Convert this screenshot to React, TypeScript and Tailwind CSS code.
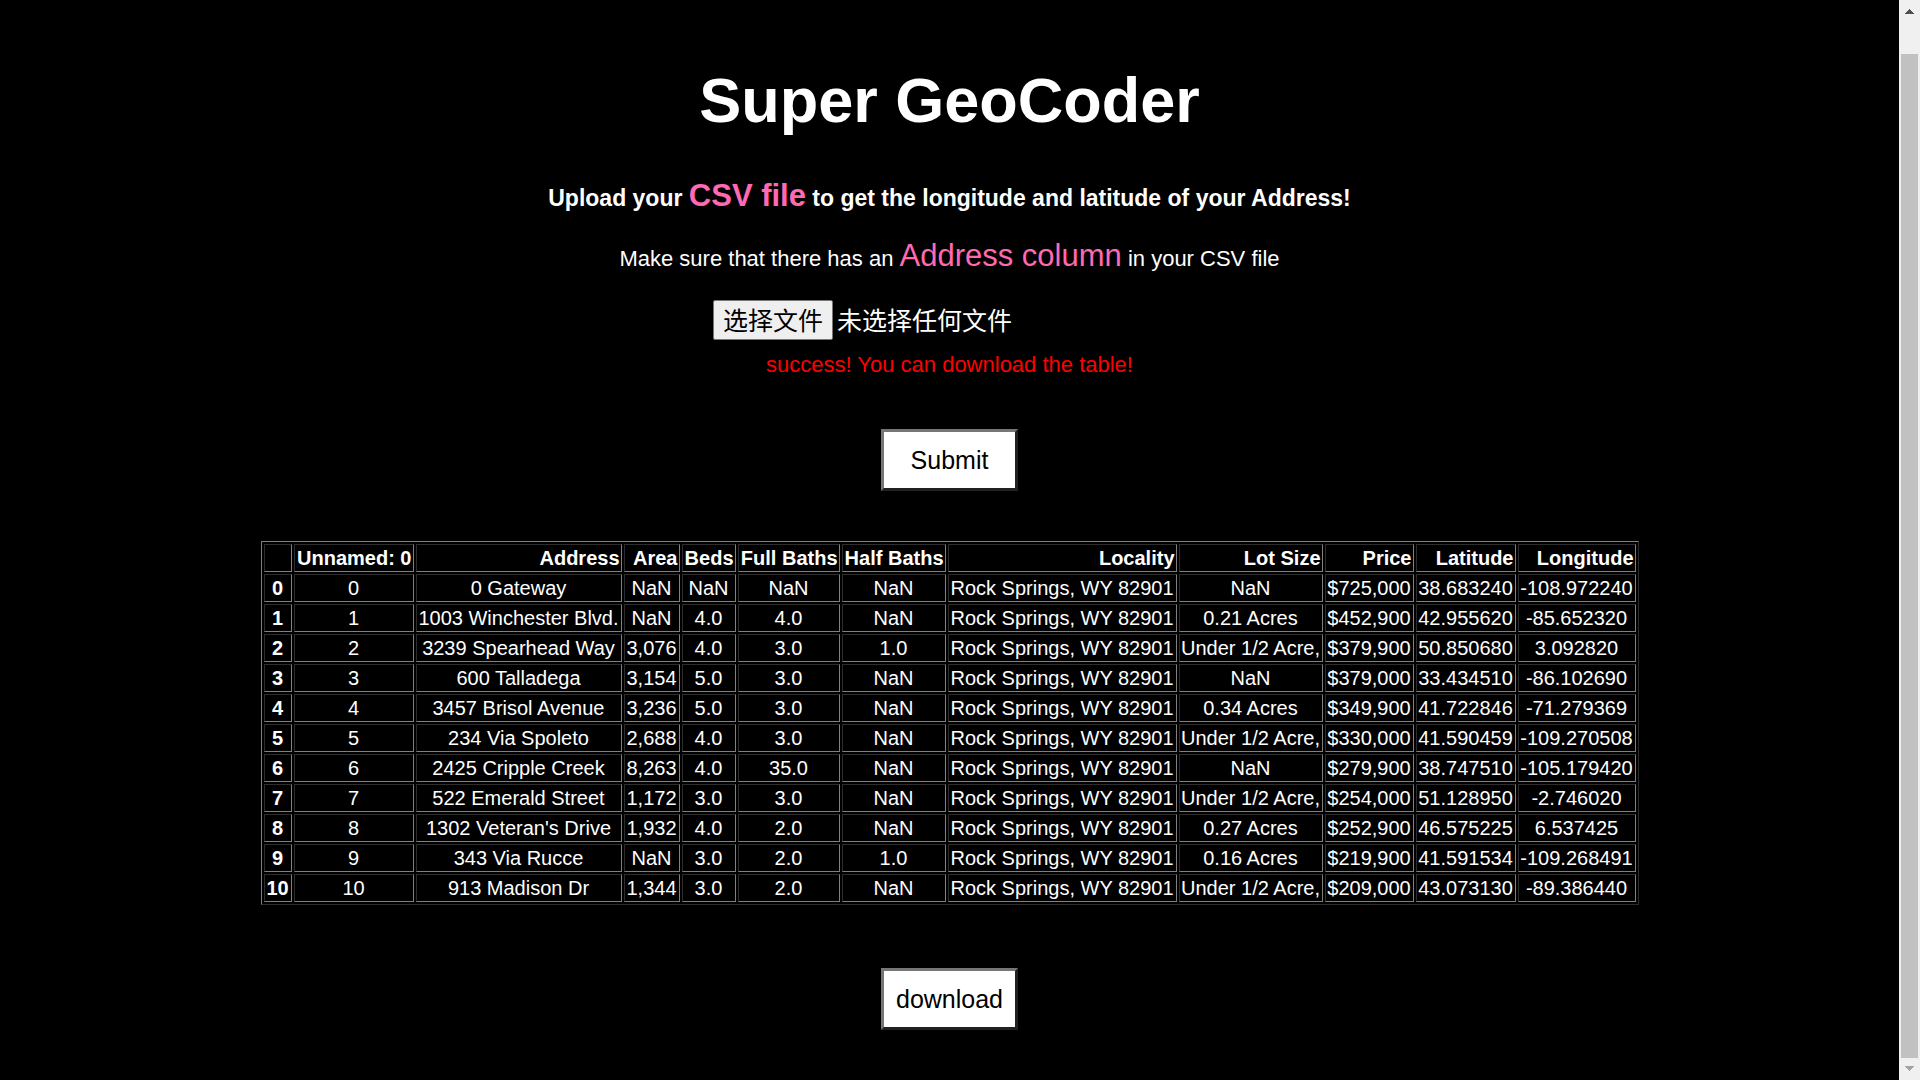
import React from "react";

const columns = [
  { name: "Unnamed: 0", width: "w-[120px]" },
  { name: "Address", width: "w-[206px]" },
  { name: "Area", width: "w-[56px]" },
  { name: "Beds", width: "w-[54px]" },
  { name: "Full Baths", width: "w-[102px]" },
  { name: "Half Baths", width: "w-[104px]" },
  { name: "Locality", width: "w-[229px]" },
  { name: "Lot Size", width: "w-[144px]" },
  { name: "Price", width: "w-[89px]" },
  { name: "Latitude", width: "w-[100px]" },
  { name: "Longitude", width: "w-[118px]" },
];

const city = "Rock Springs, WY 82901";

const rows: string[][] = [
  ["0", "0 Gateway", "NaN", "NaN", "NaN", "NaN", city, "NaN", "$725,000", "38.683240", "-108.972240"],
  ["1", "1003 Winchester Blvd.", "NaN", "4.0", "4.0", "NaN", city, "0.21 Acres", "$452,900", "42.955620", "-85.652320"],
  ["2", "3239 Spearhead Way", "3,076", "4.0", "3.0", "1.0", city, "Under 1/2 Acre,", "$379,900", "50.850680", "3.092820"],
  ["3", "600 Talladega", "3,154", "5.0", "3.0", "NaN", city, "NaN", "$379,000", "33.434510", "-86.102690"],
  ["4", "3457 Brisol Avenue", "3,236", "5.0", "3.0", "NaN", city, "0.34 Acres", "$349,900", "41.722846", "-71.279369"],
  ["5", "234 Via Spoleto", "2,688", "4.0", "3.0", "NaN", city, "Under 1/2 Acre,", "$330,000", "41.590459", "-109.270508"],
  ["6", "2425 Cripple Creek", "8,263", "4.0", "35.0", "NaN", city, "NaN", "$279,900", "38.747510", "-105.179420"],
  ["7", "522 Emerald Street", "1,172", "3.0", "3.0", "NaN", city, "Under 1/2 Acre,", "$254,000", "51.128950", "-2.746020"],
  ["8", "1302 Veteran's Drive", "1,932", "4.0", "2.0", "NaN", city, "0.27 Acres", "$252,900", "46.575225", "6.537425"],
  ["9", "343 Via Rucce", "NaN", "3.0", "2.0", "1.0", city, "0.16 Acres", "$219,900", "41.591534", "-109.268491"],
  ["10", "913 Madison Dr", "1,344", "3.0", "2.0", "NaN", city, "Under 1/2 Acre,", "$209,000", "43.073130", "-89.386440"],
];

const cell =
  "border border-t-[#2c2c2c] border-l-[#2c2c2c] border-r-[#808080] border-b-[#808080] p-px whitespace-nowrap";

function ActionButton({ children }: { children: React.ReactNode }) {
  return (
    <button
      type="button"
      className="h-[62px] w-[137px] border-3 border-t-[#767676] border-r-[#212121] border-b-[#212121] border-l-[#767676] bg-white text-[25px] leading-7 text-black"
    >
      {children}
    </button>
  );
}

function DataTable() {
  return (
    <table className="mt-[50px] border-separate border-spacing-[2px] border border-t-[#808080] border-r-[#2c2c2c] border-b-[#2c2c2c] border-l-[#808080] text-center text-[20px] leading-6">
      <colgroup>
        <col className="w-[28px]" />
        {columns.map((column) => (
          <col key={column.name} className={column.width} />
        ))}
      </colgroup>
      <thead>
        <tr className="text-right">
          <th className={cell}></th>
          {columns.map((column) => (
            <th key={column.name} scope="col" className={cell}>
              {column.name}
            </th>
          ))}
        </tr>
      </thead>
      <tbody>
        {rows.map((row, i) => (
          <tr key={i}>
            <th scope="row" className={cell}>
              {i}
            </th>
            {row.map((value, j) => (
              <td key={j} className={cell}>
                {value}
              </td>
            ))}
          </tr>
        ))}
      </tbody>
    </table>
  );
}

function ScrollBar() {
  return (
    <div aria-hidden="true" className="flex w-[21px] shrink-0 flex-col items-center bg-[#f0f0f0]">
      <svg className="mt-[9px] h-[5px] w-[9px]" viewBox="0 0 9 5" shapeRendering="crispEdges">
        <path d="M4 0h1v1h1v1h1v1h1v1h1v1H0V4h1V3h1V2h1V1h1z" fill="#505050" />
      </svg>
      <div className="mt-10 w-[17px] flex-1 bg-[#c1c1c1]" />
      <svg className="mt-[8px] mb-[9px] h-[5px] w-[9px]" viewBox="0 0 9 5" shapeRendering="crispEdges">
        <path d="M0 0h9v1H8v1H7v1H6v1H5v1H4V4H3V3H2V2H1V1H0z" fill="#a3a3a3" />
      </svg>
    </div>
  );
}

export default function App() {
  return (
    <div className="flex h-screen overflow-hidden bg-black font-['Liberation_Sans',Arial,'Noto_Sans_CJK_SC',sans-serif] text-white">
      <main className="flex min-w-0 flex-1 flex-col items-center">
        <h1 className="mt-16 text-[63px] leading-[72px] font-bold">Super GeoCoder</h1>
        <h3 className="mt-[42px] text-[23px] leading-9 font-bold">
          Upload your <span className="text-[31px] text-[#ff69b4]">CSV file</span> to get the longitude and latitude of
          your Address!
        </h3>
        <p className="mt-[22px] text-[22px] leading-9">
          Make sure that there has an <span className="text-[31px] text-[#ff69b4]">Address column</span> in your CSV
          file
        </p>
        <form className="mt-[23px] flex flex-col items-center">
          <div className="flex w-[473px] items-center gap-1 text-[25px] leading-[36px]">
            <label
              htmlFor="csv"
              className="rounded-[2px] border border-[#767676] bg-[#efefef] px-[9px] pt-0.5 text-black"
            >
              选择文件
            </label>
            <input id="csv" type="file" accept=".csv" className="sr-only" />
            <span className="pt-0.5">未选择任何文件</span>
          </div>
          <p className="mt-3 mb-[51px] text-[22px] leading-[26px] text-[#ff0000]">
            success! You can download the table!
          </p>
          <ActionButton>Submit</ActionButton>
        </form>
        <DataTable />
        <div className="mt-[63px]">
          <ActionButton>download</ActionButton>
        </div>
      </main>
      <ScrollBar />
    </div>
  );
}
